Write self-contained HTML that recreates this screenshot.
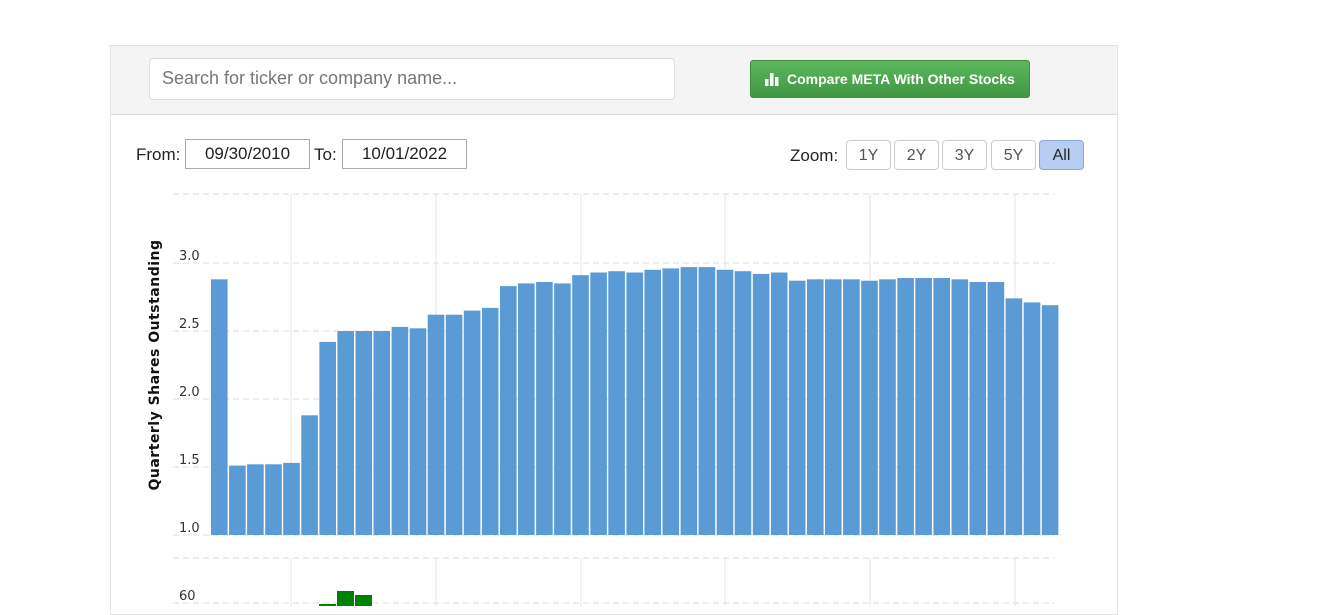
<!DOCTYPE html>
<html><head><style>
body{margin:0;width:1323px;height:606px;overflow:hidden;background:#fff;font-family:"Liberation Sans",Arial,sans-serif;position:relative}
.panel{position:absolute;left:110px;top:45px;width:1008px;height:570px;border:1px solid #e3e3e3;box-sizing:border-box}
.top{position:absolute;left:0;top:0;width:100%;height:68px;background:#f4f4f4;border-bottom:1px solid #ddd}
.search{position:absolute;left:38px;top:12px;width:526px;height:42px;background:#fff;border:1px solid #ddd;border-radius:4px;box-sizing:border-box;font-size:18px;color:#777;padding:9px 12px}
.btn{position:absolute;left:639px;top:14px;width:280px;height:38px;box-sizing:border-box;background:linear-gradient(#5cb85c,#419641);border:1px solid #3e8f3e;border-radius:3px;color:#fff;font-weight:bold;font-size:14px;line-height:36px;padding-left:36px}
.lbl{position:absolute;font-size:17px;color:#222}
.box{position:absolute;border:1px solid #aaa;font-size:17px;color:#222;text-align:center;box-sizing:border-box;height:30px;line-height:28px}
.z{position:absolute;top:140px;height:30px;border:1px solid #ccc;border-radius:4px;box-sizing:border-box;font-size:16px;color:#555;text-align:center;line-height:30px;width:45px}
</style></head><body>
<div class="panel"><div class="top">
<div class="search">Search for ticker or company name...</div>
<div class="btn"><svg style="position:absolute;left:14px;top:12px" width="14" height="13"><rect x="0" y="6" width="3.5" height="7" fill="#fff"/><rect x="5" y="0" width="3.5" height="13" fill="#fff"/><rect x="10" y="4" width="3.5" height="9" fill="#fff"/></svg>Compare META With Other Stocks</div>
</div></div>
<div class="lbl" style="left:136px;top:145px">From:</div>
<div class="box" style="left:185px;top:139px;width:125px">09/30/2010</div>
<div class="lbl" style="left:314px;top:145px">To:</div>
<div class="box" style="left:342px;top:139px;width:125px">10/01/2022</div>
<div class="lbl" style="left:790px;top:146px">Zoom:</div>
<div class="z" style="left:846px">1Y</div>
<div class="z" style="left:894px">2Y</div>
<div class="z" style="left:942px">3Y</div>
<div class="z" style="left:991px">5Y</div>
<div class="z" style="left:1039px;background:#b8cdf2;border-color:#8ea6d6;color:#222">All</div>
<svg id="c" style="position:absolute;left:0;top:0" width="1323" height="606"></svg>
<script>
var s='',v=[2.88,1.51,1.52,1.52,1.53,1.88,2.42,2.50,2.50,2.50,2.53,2.52,2.62,2.62,2.65,2.67,2.83,2.85,2.86,2.85,2.91,2.93,2.94,2.93,2.95,2.96,2.97,2.97,2.95,2.94,2.92,2.93,2.87,2.88,2.88,2.88,2.87,2.88,2.89,2.89,2.89,2.88,2.86,2.86,2.74,2.71,2.69];
[291,436,581,725,870,1015].forEach(function(x){s+='<line x1="'+x+'" y1="194" x2="'+x+'" y2="535" stroke="#e6e6e6"/><line x1="'+x+'" y1="558" x2="'+x+'" y2="606" stroke="#e6e6e6"/>';});
[194,263,331,399,467,535,558,603].forEach(function(y){s+='<line x1="173" y1="'+y+'" x2="1055" y2="'+y+'" stroke="#ddd" stroke-dasharray="6,4"/>';});
v.forEach(function(d,i){var x=211+i*18.06,t=535-(d-1)*136;s+='<rect x="'+x.toFixed(1)+'" y="'+t.toFixed(1)+'" width="16.6" height="'+(535-t).toFixed(1)+'" fill="#5b9bd5"/>';});
[['3.0',263],['2.5',331],['2.0',399],['1.5',467],['1.0',535]].forEach(function(a){s+='<text x="179" y="'+(a[1]-3)+'" font-size="13" fill="#333" font-family="DejaVu Sans">'+a[0]+'</text>';});
s+='<text x="179" y="600" font-size="13" fill="#333" font-family="DejaVu Sans">60</text>';
s+='<rect x="319" y="604" width="17" height="4" fill="#008000"/><rect x="337" y="591" width="17" height="17" fill="#008000"/><rect x="355" y="595" width="17" height="13" fill="#008000"/>';
s+='<text transform="translate(159,365) rotate(-90)" text-anchor="middle" font-size="14" font-weight="bold" fill="#111" font-family="DejaVu Sans" letter-spacing="0.5">Quarterly Shares Outstanding</text>';
document.getElementById('c').innerHTML=s;
</script>
</body></html>
